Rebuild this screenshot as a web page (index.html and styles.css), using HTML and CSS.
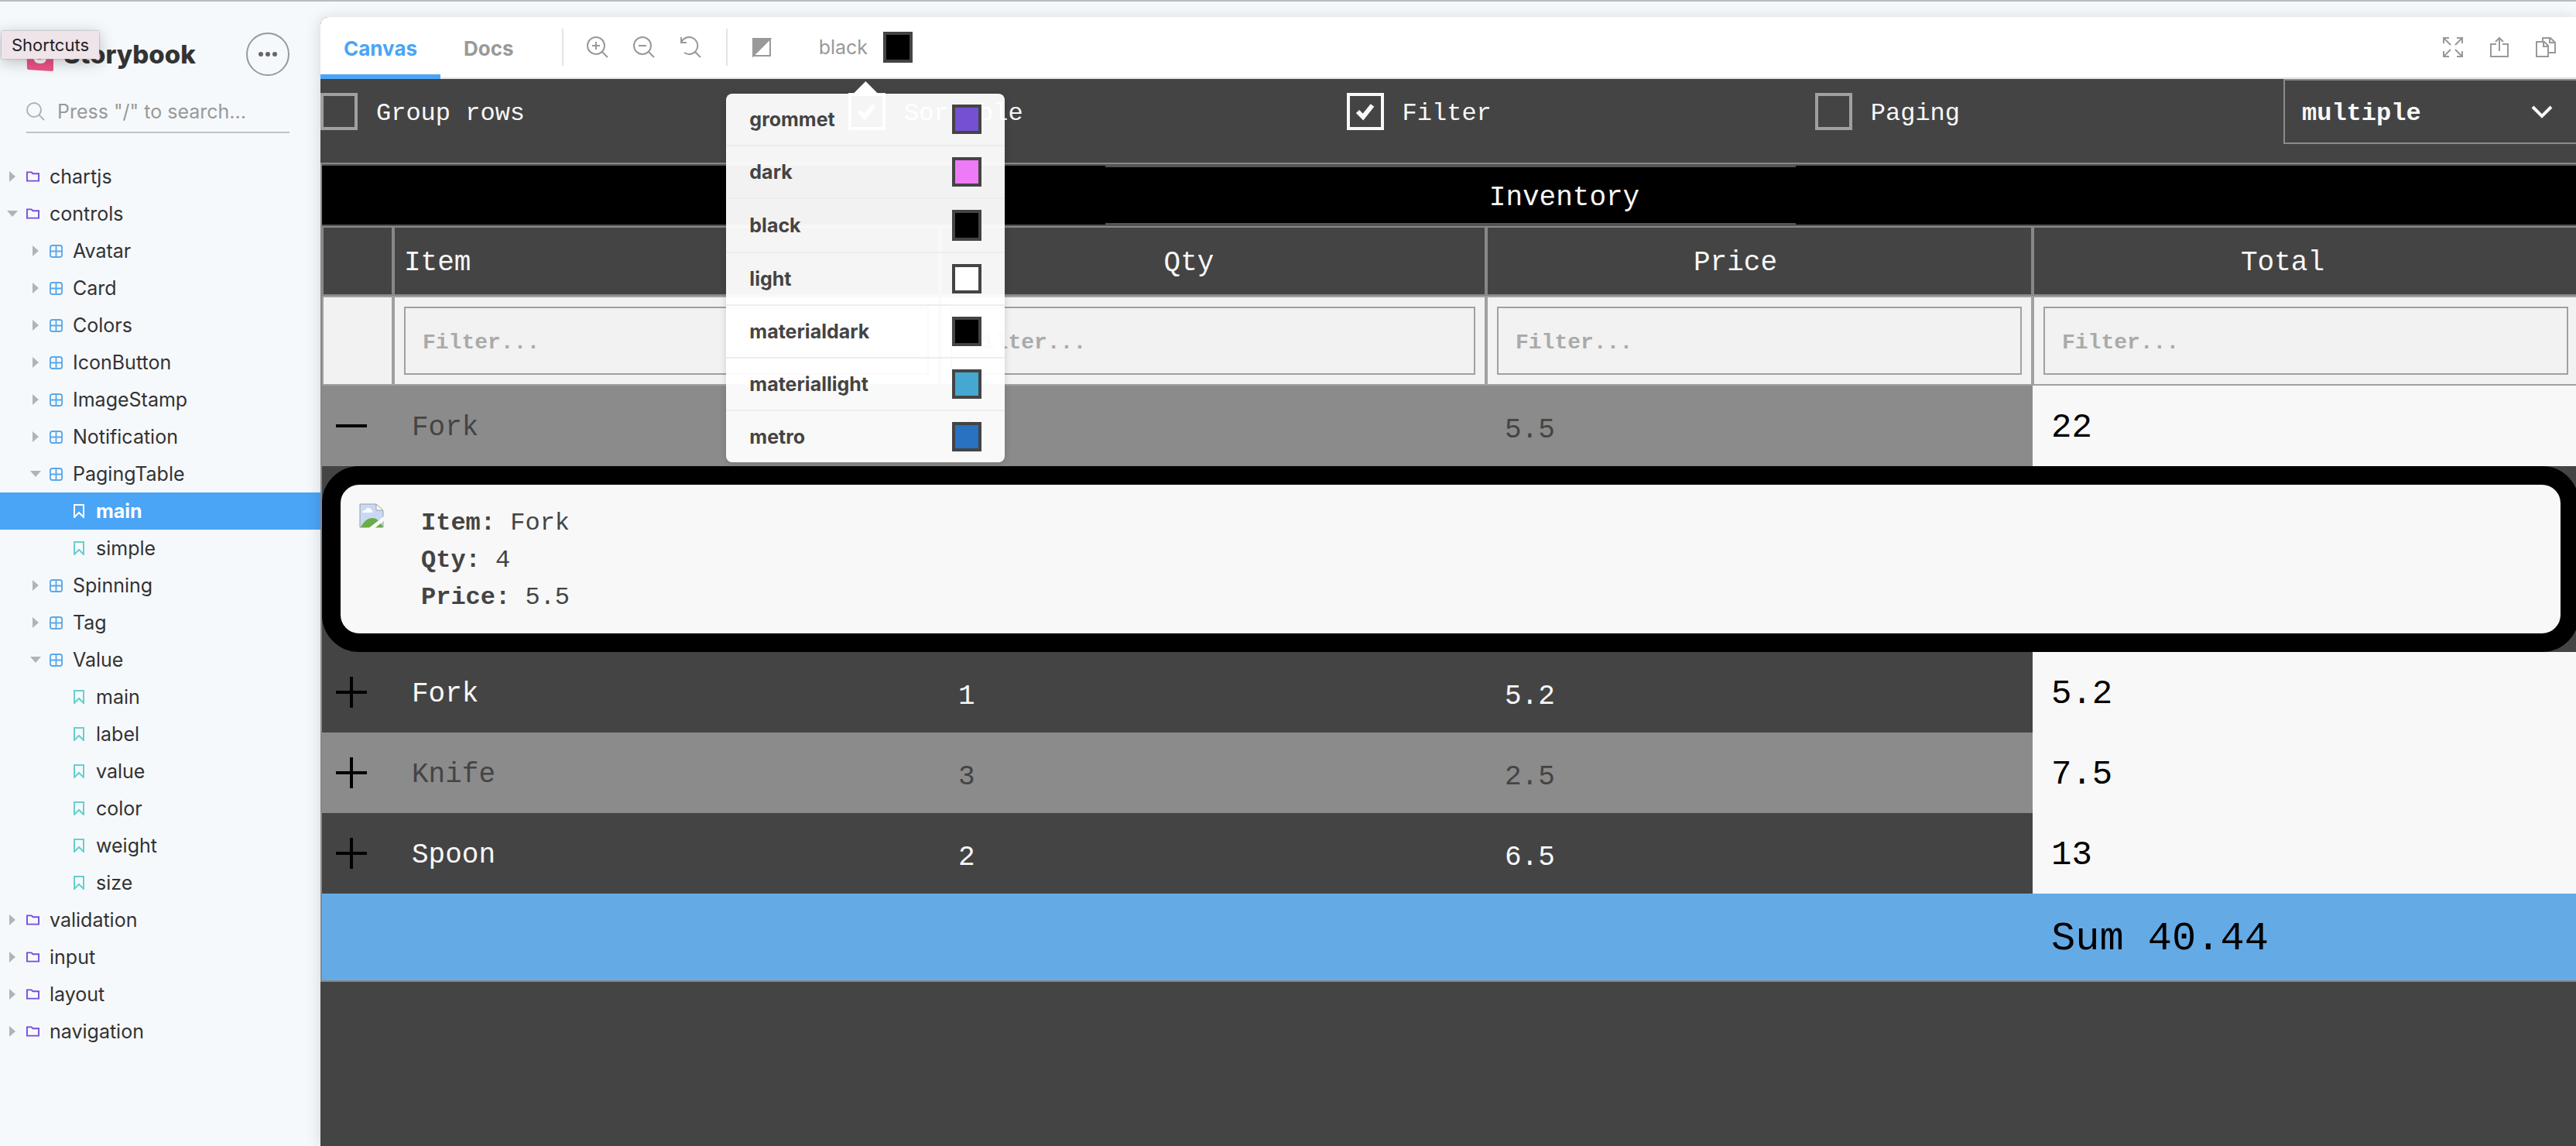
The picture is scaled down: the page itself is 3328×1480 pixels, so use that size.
FILE: index.html
```html
<!DOCTYPE html>
<html lang="en">
<head>
<meta charset="utf-8">
<title>PagingTable - main - Storybook</title>
<link rel="stylesheet" href="styles.css">
</head>
<body>
<svg class="sprite" aria-hidden="true">
  <symbol id="folder" viewBox="0 0 18 16"><path d="M1 2h6l2 2h8v10H1z" fill="none" stroke="currentColor" stroke-width="2"/></symbol>
  <symbol id="component" viewBox="0 0 18 18"><rect x="1" y="1" width="16" height="16" rx="3" fill="none" stroke="currentColor" stroke-width="2"/><path d="M9 1v16M1 9h16" stroke="currentColor" stroke-width="2"/></symbol>
  <symbol id="story" viewBox="0 0 14 18"><path d="M1 1h12v16l-6-6-6 6z" fill="none" stroke="currentColor" stroke-width="2"/></symbol>
  <symbol id="plus" viewBox="0 0 40 40"><path d="M20 0v40M0 20h40" stroke="currentColor" stroke-width="4"/></symbol>
  <symbol id="minus" viewBox="0 0 40 40"><path d="M0 20h40" stroke="currentColor" stroke-width="4"/></symbol>
</svg>
<div class="app">
  <aside class="sidebar">
    <header class="brand">
      <svg class="brand-logo" viewBox="0 0 36 44"><path d="M0 3 33 0a2 2 0 0 1 2 2v40a2 2 0 0 1-2 2L3 42a2 2 0 0 1-2-2z" fill="#ec5485"/><path d="M25 15c0-5-3-7-8-7s-8 3-8 7c0 8 12 6 12 11 0 2-1 3-4 3s-4-2-4-5H9c0 7 3 10 9 10s8-3 8-8c0-8-12-6-12-11 0-2 1-3 4-3s3 1 3 3z" fill="#fff"/></svg>
      <span class="brand-name">Storybook</span>
      <button class="menu-button" aria-label="Shortcuts"><svg viewBox="0 0 24 6"><circle cx="3" cy="3" r="3"/><circle cx="12" cy="3" r="3"/><circle cx="21" cy="3" r="3"/></svg></button>
      <span class="tooltip" role="tooltip">Shortcuts</span>
    </header>
    <label class="search">
      <svg viewBox="0 0 24 24"><circle cx="10" cy="10" r="9" fill="none" stroke="currentColor" stroke-width="2"/><path d="m16 16 7 7" stroke="currentColor" stroke-width="2"/></svg>
      <input type="text" aria-label="Search stories" placeholder='Press "/" to search...'>
    </label>
    <nav class="tree">
      <a class="node" href="#chartjs"><i class="arrow"></i><svg class="folder"><use href="#folder"/></svg>chartjs</a>
      <a class="node open" href="#controls"><i class="arrow"></i><svg class="folder"><use href="#folder"/></svg>controls</a>
      <div class="branch">
        <a class="node" href="#avatar"><i class="arrow"></i><svg class="component"><use href="#component"/></svg>Avatar</a>
        <a class="node" href="#card"><i class="arrow"></i><svg class="component"><use href="#component"/></svg>Card</a>
        <a class="node" href="#colors"><i class="arrow"></i><svg class="component"><use href="#component"/></svg>Colors</a>
        <a class="node" href="#iconbutton"><i class="arrow"></i><svg class="component"><use href="#component"/></svg>IconButton</a>
        <a class="node" href="#imagestamp"><i class="arrow"></i><svg class="component"><use href="#component"/></svg>ImageStamp</a>
        <a class="node" href="#notification"><i class="arrow"></i><svg class="component"><use href="#component"/></svg>Notification</a>
        <a class="node open" href="#pagingtable"><i class="arrow"></i><svg class="component"><use href="#component"/></svg>PagingTable</a>
        <a class="node leaf current" href="#pagingtable-main"><svg class="story"><use href="#story"/></svg>main</a>
        <a class="node leaf" href="#pagingtable-simple"><svg class="story"><use href="#story"/></svg>simple</a>
        <a class="node" href="#spinning"><i class="arrow"></i><svg class="component"><use href="#component"/></svg>Spinning</a>
        <a class="node" href="#tag"><i class="arrow"></i><svg class="component"><use href="#component"/></svg>Tag</a>
        <a class="node open" href="#value"><i class="arrow"></i><svg class="component"><use href="#component"/></svg>Value</a>
        <a class="node leaf" href="#value-main"><svg class="story"><use href="#story"/></svg>main</a>
        <a class="node leaf" href="#value-label"><svg class="story"><use href="#story"/></svg>label</a>
        <a class="node leaf" href="#value-value"><svg class="story"><use href="#story"/></svg>value</a>
        <a class="node leaf" href="#value-color"><svg class="story"><use href="#story"/></svg>color</a>
        <a class="node leaf" href="#value-weight"><svg class="story"><use href="#story"/></svg>weight</a>
        <a class="node leaf" href="#value-size"><svg class="story"><use href="#story"/></svg>size</a>
      </div>
      <a class="node" href="#validation"><i class="arrow"></i><svg class="folder"><use href="#folder"/></svg>validation</a>
      <a class="node" href="#input"><i class="arrow"></i><svg class="folder"><use href="#folder"/></svg>input</a>
      <a class="node" href="#layout"><i class="arrow"></i><svg class="folder"><use href="#folder"/></svg>layout</a>
      <a class="node" href="#navigation"><i class="arrow"></i><svg class="folder"><use href="#folder"/></svg>navigation</a>
    </nav>
  </aside>
  <main class="preview">
    <div class="toolbar">
      <button class="tab active">Canvas</button>
      <button class="tab">Docs</button>
      <span class="divider"></span>
      <button class="tool" aria-label="Zoom in"><svg viewBox="0 0 28 28"><circle cx="12" cy="12" r="11"/><path d="m20 20 7 7M12 7v10M7 12h10"/></svg></button>
      <button class="tool" aria-label="Zoom out"><svg viewBox="0 0 28 28"><circle cx="12" cy="12" r="11"/><path d="m20 20 7 7M7 12h10"/></svg></button>
      <button class="tool" aria-label="Reset zoom"><svg viewBox="0 0 28 28"><path d="M2 8a11 11 0 1 1 4 13M2 1v7h7M20 20l7 7"/></svg></button>
      <span class="divider"></span>
      <button class="tool" aria-label="Background"><svg viewBox="0 0 28 28"><path d="M3 3h22v22H3z"/><path class="solid" d="M3 3h22L3 25z"/></svg></button>
      <div class="theme">
        <button class="theme-button">black<span class="swatch tall black"></span></button>
        <div class="theme-menu">
          <button class="theme-item">grommet<span class="swatch grommet"></span></button>
          <button class="theme-item">dark<span class="swatch dark"></span></button>
          <button class="theme-item">black<span class="swatch tall black"></span></button>
          <button class="theme-item">light<span class="swatch light"></span></button>
          <button class="theme-item">materialdark<span class="swatch black"></span></button>
          <button class="theme-item">materiallight<span class="swatch materiallight"></span></button>
          <button class="theme-item">metro<span class="swatch metro"></span></button>
        </div>
      </div>
      <div class="toolbar-end">
        <button class="tool" aria-label="Fullscreen"><svg viewBox="0 0 28 28"><path d="M2 9V2h7M2 2l9 9M19 2h7v7M26 2l-9 9M2 19v7h7M2 26l9-9M26 19v7h-7M26 26l-9-9"/></svg></button>
        <button class="tool" aria-label="Open in new tab"><svg viewBox="0 0 28 28"><path d="M10 10H3v16h22V10h-7M14 19V2M9 7l5-5 5 5"/></svg></button>
        <button class="tool" aria-label="Copy link"><svg viewBox="0 0 28 28"><path d="M2 7h10l5 5v14H2zM11 7v6h6M10 7V2h10l6 6v13h-9M19 2v6h7"/></svg></button>
      </div>
    </div>
    <div class="canvas">
      <div class="controls">
        <label class="check"><input type="checkbox"><span>Group rows</span></label>
        <label class="check"><input type="checkbox" checked><span>Sortable</span><svg viewBox="0 0 48 48"><path d="m14 24 7 7 12-15"/></svg></label>
        <label class="check"><input type="checkbox" checked><span>Filter</span><svg viewBox="0 0 48 48"><path d="m14 24 7 7 12-15"/></svg></label>
        <label class="check"><input type="checkbox"><span>Paging</span></label>
        <div class="select">
          <select aria-label="Selection mode"><option>multiple</option></select>
          <svg viewBox="0 0 28 18"><path d="m2 3 12 12L26 3"/></svg>
        </div>
      </div>
      <table class="grid">
        <colgroup><col class="col-expand"><col><col><col><col></colgroup>
        <thead>
          <tr class="title-row"><th colspan="5"><div class="title">Inventory</div></th></tr>
          <tr class="head-row"><th></th><th class="start">Item</th><th>Qty</th><th>Price</th><th>Total</th></tr>
          <tr class="filter-row">
            <td></td>
            <td><input type="text" aria-label="Filter item" placeholder="Filter..."></td>
            <td><input type="text" aria-label="Filter quantity" placeholder="Filter..."></td>
            <td><input type="text" aria-label="Filter price" placeholder="Filter..."></td>
            <td><input type="text" aria-label="Filter total" placeholder="Filter..."></td>
          </tr>
        </thead>
        <tbody>
          <tr class="row alt"><td><button class="expand" aria-label="Collapse"><svg><use href="#minus"/></svg></button></td><td>Fork</td><td class="num">4</td><td class="num">5.5</td><td class="total">22</td></tr>
          <tr><td colspan="5" class="detail-cell">
            <div class="detail">
              <svg class="thumb" viewBox="0 0 32 32"><path d="M1 1h21l9 9v21H1z" fill="#c9d9f5" stroke="#9a9ea8"/><path d="M4 12c0-3 3-3 4-3 1-4 7-4 8 0 2 0 2 3 0 3z" fill="#fff"/><path d="M2 31c4-8 9-12 15-12 6 0 10 4 14 12z" fill="#6cab47"/><path d="M22 1v8h9z" fill="#fff" stroke="#9a9ea8"/><path d="m11 33 22-17v6L19 33z" fill="#f8f8f8"/></svg>
              <div class="facts">
                <div><b>Item:</b> Fork</div>
                <div><b>Qty:</b> 4</div>
                <div><b>Price:</b> 5.5</div>
              </div>
            </div>
          </td></tr>
          <tr class="row"><td><button class="expand" aria-label="Expand"><svg><use href="#plus"/></svg></button></td><td>Fork</td><td class="num">1</td><td class="num">5.2</td><td class="total">5.2</td></tr>
          <tr class="row alt"><td><button class="expand" aria-label="Expand"><svg><use href="#plus"/></svg></button></td><td>Knife</td><td class="num">3</td><td class="num">2.5</td><td class="total">7.5</td></tr>
          <tr class="row"><td><button class="expand" aria-label="Expand"><svg><use href="#plus"/></svg></button></td><td>Spoon</td><td class="num">2</td><td class="num">6.5</td><td class="total">13</td></tr>
        </tbody>
        <tfoot><tr class="sum-row"><td></td><td></td><td></td><td></td><td>Sum 40.44</td></tr></tfoot>
      </table>
    </div>
  </main>
</div>
</body>
</html>
```
FILE: styles.css
```css
* { box-sizing: border-box; }

body {
  margin: 0;
  background: #f6f9fc;
  color: #333;
  font-family: Inter, "Open Sans", sans-serif;
  font-size: 25px;
}

button {
  padding: 0;
  border: 0;
  background: none;
  color: inherit;
  font: inherit;
  cursor: pointer;
}

.sprite { display: none; }

.app {
  display: flex;
  min-height: 100vh;
  padding-top: 20px;
  border-top: 2px solid #b7bcbd;
  overflow: hidden;
}

/* Sidebar */
.sidebar { flex: 0 0 414px; min-width: 0; }

.brand {
  position: relative;
  display: flex;
  align-items: center;
  gap: 12px;
  height: 76px;
  margin: 0 40px 0 34px;
  padding-top: 20px;
}
.brand-logo { width: 36px; height: 44px; }
.brand-name { font-size: 33px; font-weight: 800; line-height: 40px; }
.menu-button {
  width: 56px;
  height: 56px;
  margin-left: auto;
  border: 2px solid #999;
  border-radius: 50%;
}
.menu-button svg { display: block; width: 24px; height: 6px; margin: 0 auto; fill: #666; }
.tooltip {
  position: absolute;
  top: 18px;
  left: -32px;
  width: 126px;
  height: 36px;
  background: #efe4ea;
  box-shadow: 0 0 2px #999, 0 4px 20px rgba(0, 0, 0, .25);
  color: #222;
  font-size: 22px;
  line-height: 36px;
  text-align: center;
}

.search {
  display: flex;
  align-items: center;
  gap: 16px;
  height: 54px;
  margin: 20px 40px 32px 34px;
  border-bottom: 2px solid #bec3c7;
  color: #b0b3b6;
}
.search svg { flex: none; width: 24px; height: 24px; }
.search input {
  flex: 1;
  width: 100%;
  min-width: 0;
  padding: 0;
  border: 0;
  background: none;
  font: inherit;
}
.search input::placeholder { color: #999; }

.node {
  display: flex;
  align-items: center;
  height: 48px;
  padding-left: 12px;
  color: #333;
  text-decoration: none;
}
.branch .node { padding-left: 42px; }
.branch .leaf { padding-left: 95px; }
.arrow {
  width: 8px;
  height: 14px;
  margin-right: 14px;
  background: #b3b3b3;
  clip-path: polygon(0 0, 100% 50%, 0 100%);
}
.open .arrow {
  width: 14px;
  height: 8px;
  margin: 0 11px 0 -3px;
  clip-path: polygon(0 0, 100% 0, 50% 100%);
}
.folder { width: 17px; height: 16px; margin-right: 13px; color: #774dd7; }
.component { width: 17px; height: 17px; margin-right: 13px; color: #5aa9ec; }
.story { width: 14px; height: 18px; margin-right: 15px; color: #66d0cb; }
.current { background: #4aa5f6; color: #fff; font-weight: 700; }
.current .story { color: #fff; }

/* Toolbar */
.preview {
  flex: 1;
  min-width: 0;
  display: flex;
  flex-direction: column;
  border-radius: 10px 0 0 0;
  background: #444;
  box-shadow: 0 2px 20px rgba(0, 0, 0, .15);
}
.toolbar {
  position: relative;
  z-index: 1;
  display: flex;
  align-items: center;
  height: 80px;
  padding-right: 9px;
  border-bottom: 2px solid #e3e3e3;
  border-radius: 10px 0 0 0;
  background: #fff;
  color: #999;
}
.tab {
  height: 80px;
  margin-bottom: -2px;
  padding: 0 30px;
  border-top: 6px solid transparent;
  border-bottom: 6px solid transparent;
  font-size: 26px;
  font-weight: 700;
}
.tab.active { border-bottom-color: #4aa5f6; color: #4aa5f6; }
.divider { width: 2px; height: 48px; margin: 0 14px 0 32px; background: #e3e3e3; }
.divider ~ .divider { margin-left: 16px; }
.tool { display: grid; place-items: center; width: 60px; height: 60px; }
.tool svg {
  width: 28px;
  height: 28px;
  fill: none;
  stroke: #999;
  stroke-width: 2;
}
.tool .solid { fill: #999; }
.toolbar-end { display: flex; margin-left: auto; }

.theme { position: relative; margin-left: 44px; }
.theme-button { display: flex; align-items: center; gap: 20px; }
.swatch { width: 38px; height: 38px; border: 4px solid #444; }
.tall { height: 40px; }
.grommet { background: #7550d2; }
.dark { background: #ee7af7; }
.black { background: #000; }
.light { background: #fff; }
.materiallight { background: #45a8d0; }
.metro { background: #2971c1; }

.theme-menu {
  position: absolute;
  top: 80px;
  left: 50%;
  width: 360px;
  margin-left: -180px;
  border-radius: 8px;
  background: rgba(255, 255, 255, .95);
  box-shadow: 0 2px 10px rgba(0, 0, 0, .15);
}
.theme-menu::before {
  content: "";
  position: absolute;
  top: -16px;
  left: 164px;
  width: 32px;
  height: 16px;
  background: #fff;
  clip-path: polygon(50% 0, 100% 100%, 0 100%);
}
.theme-item {
  display: flex;
  align-items: center;
  justify-content: space-between;
  width: 100%;
  padding: 14px 30px;
  border-bottom: 2px solid #ededed;
  color: #444;
  font-weight: 700;
}
.theme-item:last-child { border-bottom: 0; }

/* Story canvas */
.canvas {
  flex: 1;
  overflow: hidden;
  color: #f8f8f8;
  font-family: "Courier New", "Liberation Mono", monospace;
  font-size: 36px;
}
.controls {
  display: flex;
  align-items: center;
  justify-content: space-between;
  width: calc(100% + 4px);
  margin-bottom: 24px;
  font-size: 32px;
}
.check { position: relative; display: flex; align-items: center; gap: 24px; }
.check span { padding-top: 4px; }
.check input {
  appearance: none;
  width: 48px;
  height: 48px;
  margin: 0;
  border: 4px solid #a0a0a0;
}
.check input:checked { border-color: #f8f8f8; }
.check svg {
  position: absolute;
  left: 0;
  width: 48px;
  height: 48px;
  fill: none;
  stroke: #f8f8f8;
  stroke-width: 6;
}
.select { display: grid; align-items: center; width: 382px; }
.select select {
  grid-area: 1 / 1;
  appearance: none;
  height: 84px;
  padding: 4px 20px 0 22px;
  border: 2px solid #8a8a8a;
  border-radius: 0;
  background: none;
  color: #f8f8f8;
  font: inherit;
  font-weight: 700;
}
.select svg {
  grid-area: 1 / 1;
  justify-self: end;
  width: 28px;
  height: 18px;
  margin-right: 34px;
  fill: none;
  stroke: #f8f8f8;
  stroke-width: 4;
  pointer-events: none;
}

.grid {
  width: calc(100% + 4px);
  table-layout: fixed;
  border-collapse: separate;
  border-spacing: 0;
  border: solid #888;
  border-width: 2px 0 2px 2px;
  line-height: 40px;
}
.col-expand { width: 92px; }
.grid th, .grid td { padding: 0; text-align: left; font-weight: 400; }

.title-row th {
  height: 80px;
  border: solid #555;
  border-width: 2px 0;
  background: #000;
}
.title {
  width: 892px;
  height: 76px;
  margin: 0 auto;
  padding: 4px 0 0 294px;
  border: solid #555;
  border-width: 2px 0;
  text-align: center;
  line-height: 72px;
}
.grid .head-row th {
  height: 90px;
  padding: 6px 62px 0 0;
  border: 2px solid #888;
  text-align: center;
}
.grid .head-row th:last-child { border-right: 0; }
.grid .head-row .start { padding-left: 12px; text-align: left; }
.grid .filter-row td {
  height: 116px;
  padding: 0 12px;
  border: 2px solid #a0a0a0;
  background: #f2f2f2;
}
.filter-row input {
  display: block;
  width: 100%;
  height: 88px;
  padding: 4px 22px 0;
  border: 2px solid #a0a0a0;
  background: none;
  font: 700 28px "Courier New", "Liberation Mono", monospace;
}
.filter-row input::placeholder { color: #aaa; }

.row { height: 104px; }
.alt { background: #8b8b8b; color: #444; }
.grid .row td { padding: 6px 24px 0; }
.grid .row td:first-child { padding: 0 0 0 18px; }
.grid .row .num { padding-top: 12px; }
.grid .row .total { padding-top: 4px; background: #f8f8f8; color: #000; font-size: 44px; }
.expand { display: block; color: #000; }
.expand svg { display: block; width: 40px; height: 40px; }

.detail {
  display: flex;
  gap: 48px;
  height: 240px;
  padding: 24px;
  border: 24px solid #000;
  border-radius: 48px;
  background: #f8f8f8;
  color: #444;
  font-size: 32px;
  line-height: 48px;
}
.thumb { width: 32px; height: 32px; }
.facts { padding-top: 2px; }

.sum-row { background: #64abe6; color: #000; font-size: 52px; }
.grid .sum-row td { height: 112px; padding: 6px 24px 0; }
```
